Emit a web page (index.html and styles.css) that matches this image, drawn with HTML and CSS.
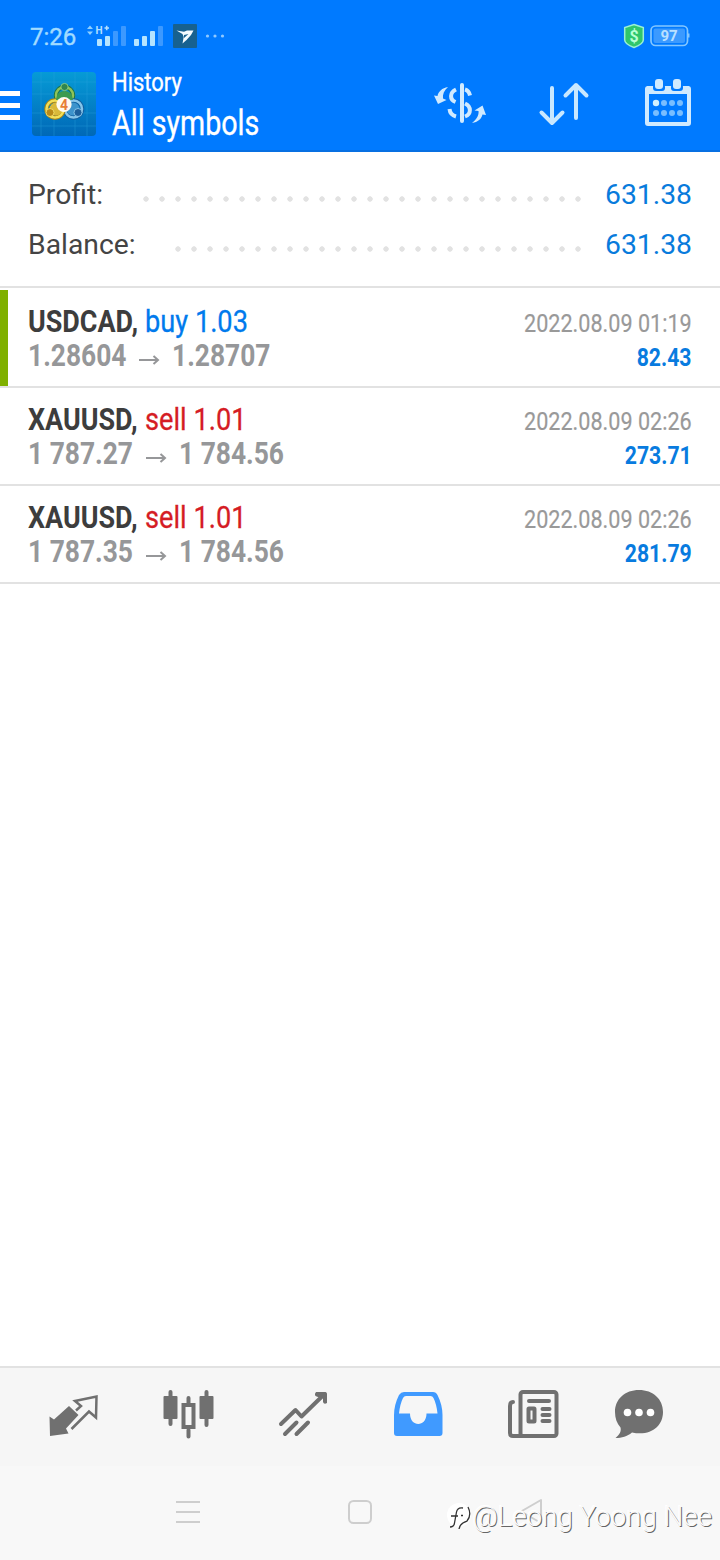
FILE: index.html
```html
<!DOCTYPE html>
<html lang="en">
<head>
<meta charset="utf-8">
<title>History</title>
<link rel="stylesheet" href="styles.css">
</head>
<body>
<div class="screen">
  <header class="top">
    <div class="status">
      <span class="clock">7:26</span>
      <svg class="signals" width="144" height="32" viewBox="84 20 144 32">
        <path d="M87 29l3-3.500 3 3.500zM87 31.500l3 3.500 3-3.500z" fill="#8fd0ff"/>
        <text x="95.500" y="34" class="net">H</text><path d="M104.500 28h4.500M106.700 25.700v4.500" stroke="#b5e0ff" stroke-width="1.600"/>
        <g fill="#b5e4ff"><rect x="97" y="39" width="5" height="7" rx="1"/><rect x="105" y="36" width="5" height="10" rx="1"/><rect x="134" y="39" width="5" height="7" rx="1"/><rect x="142" y="36" width="5" height="10" rx="1"/><rect x="150" y="31" width="5" height="15" rx="1"/></g>
        <g fill="#3c99ff"><rect x="113" y="31" width="5" height="15" rx="1"/><rect x="121" y="26" width="5" height="20" rx="1"/><rect x="158" y="26" width="5" height="20" rx="1"/></g>
        <rect x="173" y="24" width="24" height="24" rx="1" fill="#17618f"/>
        <path d="M176.500 30.500l7.500 1.300 3-1.300h6.500l-2.500 4.500-4.500 5-4 3.500 1.200-6.500-1.200-3z" fill="#f4fbff"/>
        <path d="M184 35l4.500-1-4.500 4z" fill="#17618f"/>
        <g fill="#8fc9ff"><circle cx="207.500" cy="36" r="1.600"/><circle cx="215" cy="36" r="1.600"/><circle cx="222.500" cy="36" r="1.600"/></g>
      </svg>
      <svg class="power" width="70" height="28" viewBox="622 22 70 28">
        <path d="M634 24.500l9.300 3v12.500q0 4-9.300 7.500q-9.300-3.500-9.300-7.500v-12.500z" fill="#30c66c" stroke="#9af0d4" stroke-width="1.500"/>
        <text x="634" y="42" class="coin">$</text>
        <rect x="651" y="26" width="36.500" height="19.500" rx="4.500" fill="none" stroke="#84c7ff" stroke-width="1.700"/>
        <rect x="653.500" y="28.500" width="31.500" height="14.500" rx="2" fill="#3b9aff"/>
        <path d="M688.500 33.500v4" stroke="#84c7ff" stroke-width="2"/>
        <text x="669" y="41" class="charge">97</text>
      </svg>
    </div>
    <div class="bar">
      <svg class="menu" width="20" height="30" viewBox="0 0 20 30"><path d="M0 2.500h20M0 14.500h20M0 26.500h20" stroke="#fff" stroke-width="5"/></svg>
      <svg class="logo" width="64" height="64" viewBox="0 0 64 64">
        <defs>
          <linearGradient id="sky" x1="0" y1="0" x2="0" y2="1"><stop offset="0" stop-color="#069bd6"/><stop offset="1" stop-color="#0068b7"/></linearGradient>
        </defs>
        <rect width="64" height="64" rx="4" fill="url(#sky)"/>
        <path d="M9 0v64M22 0v64M43 0v64M55 0v64M0 10h64M0 22h64M0 41h64M0 54h64" stroke="#2ba4df" stroke-width=".6" opacity=".6"/>
        <g fill="none" stroke-width="4.500">
          <circle cx="32.500" cy="23.500" r="8.500" stroke="#1f7446"/><circle cx="32.500" cy="23.500" r="8.500" stroke="#8fc458" stroke-width="2.500"/>
          <circle cx="41.500" cy="37" r="8.500" stroke="#135f9f"/><circle cx="41.500" cy="37" r="8.500" stroke="#86c5ea" stroke-width="2.500"/>
          <circle cx="23" cy="37" r="8.500" stroke="#a98518"/><circle cx="23" cy="37" r="8.500" stroke="#f2df58" stroke-width="2.500"/>
        </g>
        <path d="M24 28q1-9 8.500-9t8.500 9z" fill="#3c9a50"/>
        <circle cx="24" cy="37" r="6.500" fill="#d9b93a"/><circle cx="41" cy="37" r="6.500" fill="#3d93cc"/>
        <circle cx="32.500" cy="15" r="3.600" fill="#2f8550" stroke="#9bd683" stroke-width=".8"/>
        <circle cx="18" cy="40.500" r="4" fill="#b98a18" stroke="#f9e873" stroke-width=".8"/>
        <circle cx="46" cy="40.500" r="4" fill="#1c5f9c" stroke="#9ad6f5" stroke-width=".8"/>
        <circle cx="32" cy="32.500" r="7.600" fill="#fffaf0"/><text x="32" y="37.500" class="four">4</text>
      </svg>
      <div class="titles"><h1><span>History</span></h1><p><span>All symbols</span></p></div>
      <svg class="actions" width="264" height="56" viewBox="430 76 264 56">
        <g fill="none" stroke="#d0eaff" stroke-width="4">
          <path d="M462 85v36" stroke-linecap="round"/>
          <path d="M456 89.500c-6.500 3-6.500 10-.500 12.500M449.500 109c.5 4.500 3 6.500 6.500 7.500M465 89.500c3.500 1 4.500 3.500 5 6M465 103.500c6.500 3 6.500 10.500 0 13"/>
        </g>
        <path d="M448 87c-6 1-9.500 4.500-10.500 9l-3.500-.500 4 8.500 8.500-4-3.500-1.500c-.5-4 1-8 5-11.500zM472 123c5-4 7-8 6.500-12l-4-.500 8-5 3.500 9.500-3.500-.500c-1 4.500-4.500 7.500-10.500 8.500z" fill="#d0eaff"/>
        <g fill="none" stroke="#c9e8ff" stroke-width="4" stroke-linecap="round" stroke-linejoin="round"><path d="M552 88v34M541.500 112.500L552 123l10.500-10.500M576 118V85M565.500 95.500L576 85l10.500 10.500"/></g>
        <rect x="647" y="88" width="42" height="36" rx="1" fill="none" stroke="#d0eaff" stroke-width="4"/>
        <path d="M647 86h42v8h-42z" fill="#d0eaff"/>
        <g fill="#007aff"><rect x="653" y="84" width="12" height="7" rx="3"/><rect x="671" y="84" width="12" height="7" rx="3"/></g>
        <g fill="#d0eaff"><rect x="655" y="79" width="8" height="10" rx="3"/><rect x="673" y="79" width="8" height="10" rx="3"/></g>
        <circle cx="656" cy="103" r="3.200" fill="#d0f0ff"/>
        <g fill="#79beff"><circle cx="664" cy="103" r="3"/><circle cx="672" cy="103" r="3"/><circle cx="680" cy="103" r="3"/><circle cx="656" cy="113" r="3"/><circle cx="664" cy="113" r="3"/><circle cx="672" cy="113" r="3"/><circle cx="680" cy="113" r="3"/></g>
      </svg>
    </div>
  </header>
  <section class="summary">
    <div class="total"><span>Profit:</span><i class="dots long"></i><b>631.38</b></div>
    <div class="total"><span>Balance:</span><i class="dots"></i><b>631.38</b></div>
  </section>
  <main class="deals">
    <article class="deal marked">
      <div class="left"><div class="name"><strong>USDCAD,</strong><span class="buy">buy 1.03</span></div><div class="prices"><span class="from">1.28604</span><svg width="22" height="14" viewBox="0 0 22 14"><path d="M1 7h19M15.500 3L20 7l-4.500 4"/></svg><span>1.28707</span></div></div>
      <div class="right"><time>2022.08.09 01:19</time><b>82.43</b></div>
    </article>
    <article class="deal">
      <div class="left"><div class="name"><strong>XAUUSD,</strong><span class="sell">sell 1.01</span></div><div class="prices"><span class="from wide">1 787.27</span><svg width="22" height="14" viewBox="0 0 22 14"><path d="M1 7h19M15.500 3L20 7l-4.500 4"/></svg><span>1 784.56</span></div></div>
      <div class="right"><time>2022.08.09 02:26</time><b>273.71</b></div>
    </article>
    <article class="deal">
      <div class="left"><div class="name"><strong>XAUUSD,</strong><span class="sell">sell 1.01</span></div><div class="prices"><span class="from wide">1 787.35</span><svg width="22" height="14" viewBox="0 0 22 14"><path d="M1 7h19M15.500 3L20 7l-4.500 4"/></svg><span>1 784.56</span></div></div>
      <div class="right"><time>2022.08.09 02:26</time><b>281.79</b></div>
    </article>
  </main>
  <nav class="tabs">
    <svg width="52" height="52" viewBox="47 1388 52 52"><path d="M69 1406l9.500 9-12.500 13.500 2.500 5-18.500 2.500-.500-19.500 4.500 3z" fill="#707070"/><path d="M76 1410.500l5-4.500-6-5 21.500-4.500-.500 21-7-6-17.500 17.500" fill="none" stroke="#707070" stroke-width="2.500"/></svg>
    <svg width="52" height="52" viewBox="162 1388 52 52"><g fill="#707070"><rect x="163.500" y="1396" width="14" height="23" rx="1"/><rect x="199.500" y="1396" width="14" height="23" rx="1"/></g><path d="M170.500 1392v32M206.500 1392v33M188.500 1398v6M188.500 1430v6.500" stroke="#707070" stroke-width="4" stroke-linecap="round"/><rect x="183.500" y="1405" width="10" height="22" fill="none" stroke="#707070" stroke-width="4"/></svg>
    <svg width="52" height="52" viewBox="277 1388 52 52"><g fill="none" stroke="#707070" stroke-width="4" stroke-linecap="round" stroke-linejoin="round"><path d="M281 1424l14.500-14 6 6.500 23-22.500M285 1434l11.500-11.500M296.500 1434l11.500-11.500"/></g><path d="M316 1392h9q2 0 2 2v9q-3 2-4-1v-5h-5q-5-1-2-5z" fill="#707070"/></svg>
    <svg width="52" height="52" viewBox="392 1388 52 52"><path fill-rule="evenodd" d="M404 1392h29q3 0 4.500 3 5 10 5 20v18q0 3-3 3h-42.500q-3 0-3-3v-18q0-10 5-20 2-3 5-3zM406 1396q-2 0-3 2-3 6-4 15.500h11c0 14 16.500 14 16.500 0h11q-1-9.500-4-15.500-1-2-3-2z" fill="#409aff"/></svg>
    <svg width="52" height="52" viewBox="507 1388 52 52"><g fill="none" stroke="#707070" stroke-width="4"><rect x="520.500" y="1392" width="36" height="44" rx="2.500"/><path d="M513 1402q-3 0-3 4v27q0 3 3 3h10M529 1401h20M542.500 1409h7M542.500 1415h7M542.500 1421h7" stroke-linecap="round"/><rect x="528.500" y="1408.500" width="6" height="13" rx=".5"/></g></svg>
    <svg width="52" height="52" viewBox="613 1388 52 52"><path d="M639 1390c14 0 24 9 24 22 0 14-12 24.500-31 20.500-5 4-10 5.500-16.500 5.500 4-3.500 6-6.500 5-10.500-3.500-4-5.500-9-5.500-15.500 0-13 10-22 24-22z" fill="#707070"/><g fill="#fff"><circle cx="627.500" cy="1412.500" r="3.800"/><circle cx="639" cy="1412.500" r="3.800"/><circle cx="650.500" cy="1412.500" r="3.800"/></g></svg>
  </nav>
  <footer class="system">
    <svg width="26" height="28" viewBox="175 1498 26 28"><path d="M176 1502h24M176 1512h24M176 1522h24" stroke="#cecece" stroke-width="2"/></svg>
    <svg width="26" height="28" viewBox="347 1498 26 28"><rect x="349" y="1501" width="22" height="22" rx="4.500" fill="none" stroke="#cecece" stroke-width="2"/></svg>
    <svg width="26" height="28" viewBox="519 1498 26 28"><path d="M541 1500v23l-20-11.500z" fill="none" stroke="#cecece" stroke-width="2" stroke-linejoin="round"/></svg>
    <div class="credit"><svg width="25" height="32" viewBox="446 1502 25 32"><circle cx="458" cy="1516" r="12" fill="#fff"/><path d="M449 1528q4 0 4.500-4l2-11q1-5 6.500-4M450 1517h7M460 1516.500h2M467 1508q4 8-1 14-7 2-8 8" fill="none" stroke="#333" stroke-width="1.300"/></svg><span>@Leong Yoong Nee</span></div>
  </footer>
</div>
</body>
</html>
```
FILE: styles.css
```css
* { box-sizing: border-box; }
body { margin: 0; background: #fff; font-family: Roboto, "Liberation Sans", sans-serif; }
svg { display: block; flex: none; }
.screen { width: 720px; height: 1560px; display: flex; flex-direction: column; overflow: hidden; }
.top { height: 152px; background: #007aff; border-bottom: 2px solid #0870e2; flex: none; }
.status { height: 72px; padding: 20px 28px 0 30px; display: flex; align-items: flex-start; }
.clock { width: 54px; font-size: 24px; line-height: 34px; color: #a1dbff; -webkit-text-stroke: .4px #a1dbff; }
.power { margin-left: auto; margin-top: 2px; }
.net { font: bold 10px Roboto, sans-serif; fill: #b5e0ff; }
.coin { font: bold 16px Roboto, sans-serif; fill: #b9ffd6; text-anchor: middle; }
.charge { font: bold 15px Roboto, sans-serif; fill: #b9e0ff; text-anchor: middle; }
.four { font: bold 14px Roboto, sans-serif; fill: #e77f37; text-anchor: middle; }
.bar { display: flex; height: 78px; color: #fff; align-items: flex-start; }
.menu { margin-top: 19px; }
.logo { margin-left: 12px; }
.titles { margin-left: 16px; width: 318px; }
.titles h1, .titles p { margin: 0; font-weight: 400; white-space: nowrap; -webkit-text-stroke: .35px #fff; }
.titles span, .name > *, .prices span, .right > * { display: block; white-space: nowrap; transform-origin: left center; }
.titles h1 { font-size: 26px; line-height: 30px; margin-top: -5px; }
.titles p { font-size: 34.5px; line-height: 52px; }
.titles h1 span { transform: scaleX(.845); }
.titles p span { transform: scaleX(.83); }
.actions { margin-top: 4px; }
.summary { height: 136px; padding: 18px 28px 0; border-bottom: 2px solid #e2e2e2; flex: none; }
.total { height: 50px; display: flex; align-items: flex-start; font-size: 28.300px; line-height: 50px; color: #444; }
.total span { width: 139px; }
.total b { color: #087bdc; font-weight: 400; margin-left: auto; }
.dots { width: 412px; height: 6px; margin: 26px 0 0 3px; background: radial-gradient(circle at 8px 3px, #e2e2e2 0 2.400px, transparent 3px) 0 0 / 16px 6px repeat-x; }
.dots.long { width: 444px; margin-left: -29px; }
.deals { flex: 1; }
.deal { height: 98px; padding: 13px 28px 0; border-bottom: 2px solid #e2e2e2; display: flex; justify-content: space-between; }
.marked { height: 100px; padding-top: 15px; background: linear-gradient(#7fb000, #7fb000) 0 2px / 8px 96px no-repeat; }
.name { display: flex; font-size: 32px; line-height: 36px; color: #3d3d3d; }
.name strong { width: 117px; transform: scaleX(.842); }
.name span { transform: scaleX(.85); -webkit-text-stroke: .3px currentColor; }
.buy { color: #007aed; }
.sell { color: #d51c24; }
.prices { display: flex; font-size: 32px; line-height: 33px; font-weight: 700; color: #969799; }
.prices svg { margin: 14px 12px 0 -1px; }
.prices path { fill: none; stroke: #969799; stroke-width: 2; }
.prices span { transform: scaleX(.824); }
.prices .from { width: 111px; }
.prices .wide { width: 118px; }
.right { display: flex; flex-direction: column; align-items: flex-end; }
.right > * { transform-origin: right center; }
.right time { font-size: 26.500px; line-height: 36px; color: #999; transform: scaleX(.815); margin-top: 2px; -webkit-text-stroke: .2px #999; }
.right b { font-size: 26.500px; line-height: 32px; color: #087bdf; transform: scaleX(.8); }
.tabs { height: 100px; background: #f6f6f6; border-top: 2px solid #e2e2e2; display: grid; grid-template-columns: 115px 115px 115px 115px 106px 52px; padding: 20px 0 0 47px; flex: none; }
.system { position: relative; height: 94px; background: #f8f8f8; display: flex; gap: 146px; padding: 32px 0 0 175px; flex: none; }
.credit { position: absolute; right: 8px; top: 35px; display: flex; align-items: center; color: #fafafa; font-size: 27.700px; font-weight: 300; line-height: 32px; white-space: nowrap; text-shadow: 1px 1px 0 #666, -1px -1px 0 #fff; }
.credit span { margin-left: 1px; }
```
